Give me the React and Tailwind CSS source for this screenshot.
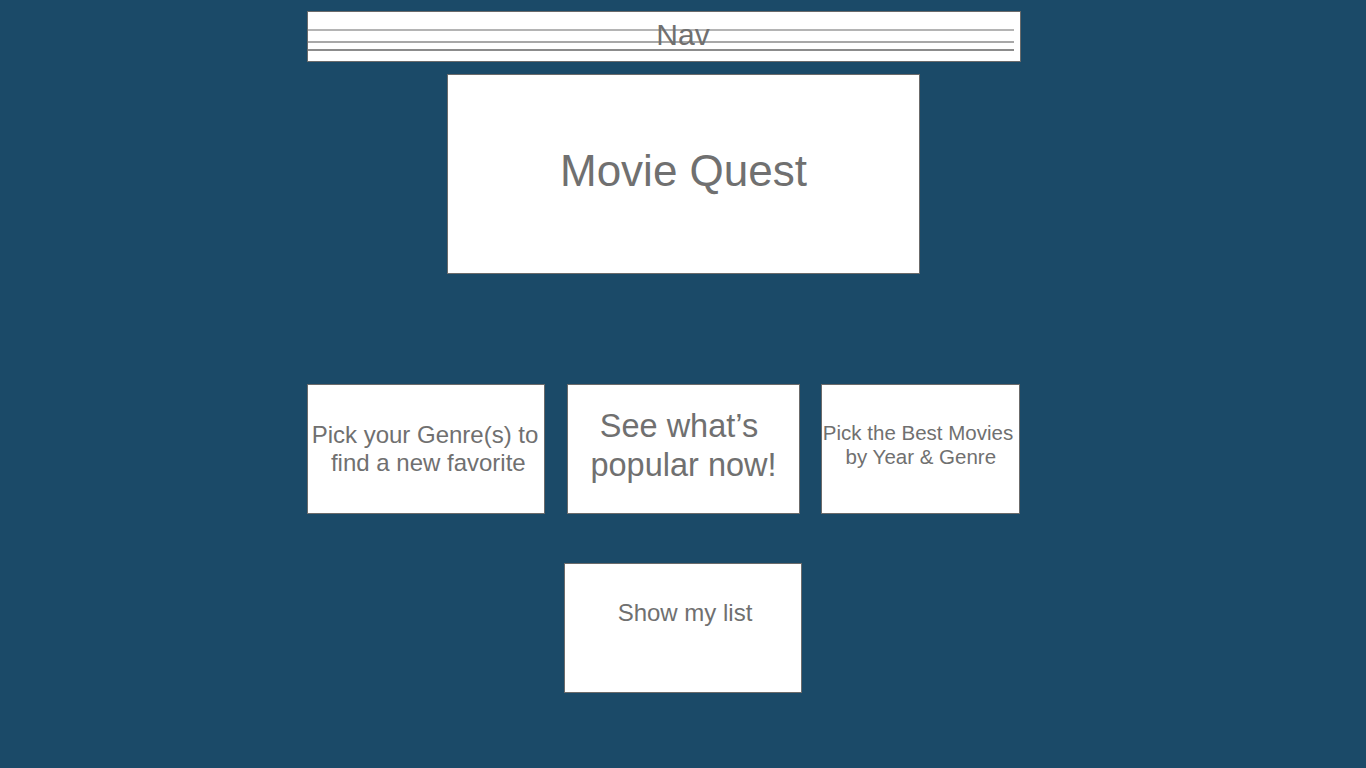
import React from "react";

const font = { fontFamily: '"Liberation Sans", Arial, Helvetica, sans-serif' };

export default function App() {
  return (
    <div
      className="min-h-screen w-full bg-[#1b4a68] pt-[11px] pl-[307px] text-[#707070]"
      style={font}
    >
      {/* Nav */}
      <div className="relative flex h-[51px] w-[714px] items-center justify-center border border-[#6b6b6b] bg-white pb-[3px] pl-[38px]">
        <div className="absolute left-0 right-[6px] top-[17px] h-[2px] bg-[#b4b4b4]" />
        <div className="absolute left-0 right-[6px] top-[29px] h-[2px] bg-[#a8a8a8]" />
        <div className="absolute left-0 right-[6px] top-[37px] h-[2px] bg-[#8c8c8c]" />
        <span className="relative text-[30px] leading-[36px]">Nav</span>
      </div>

      {/* Title */}
      <div className="ml-[140px] mt-[12px] flex h-[200px] w-[473px] items-center justify-center border border-[#6b6b6b] bg-white pb-[6px]">
        <h1 className="text-[44px] leading-[52px]">Movie Quest</h1>
      </div>

      {/* Cards row */}
      <div className="mt-[110px] flex">
        <div className="flex h-[130px] w-[238px] items-center justify-center border border-[#6b6b6b] bg-white pr-[2px] text-center text-[24px] leading-[28px]">
          <p>
            Pick your Genre(s) to
            <br />
            &nbsp;find a new favorite
          </p>
        </div>
        <div className="ml-[22px] flex h-[130px] w-[233px] items-center justify-center border border-[#6b6b6b] bg-white pb-[6px] text-center text-[32.5px] leading-[39px]">
          <p>
            See what’s&nbsp;
            <br />
            popular now!
          </p>
        </div>
        <div className="ml-[21px] flex h-[130px] w-[199px] items-center justify-center border border-[#6b6b6b] bg-white pb-[8px] pr-[5px] text-center text-[20.5px] leading-[24px] whitespace-nowrap">
          <p>
            Pick the Best Movies
            <br />
            &nbsp;by Year &amp; Genre
          </p>
        </div>
      </div>

      {/* Show my list */}
      <div className="ml-[257px] mt-[49px] flex h-[130px] w-[238px] justify-center border border-[#6b6b6b] bg-white pt-[35px] pl-[4px] text-[24px] leading-[28px]">
        <p>Show my list</p>
      </div>
    </div>
  );
}
